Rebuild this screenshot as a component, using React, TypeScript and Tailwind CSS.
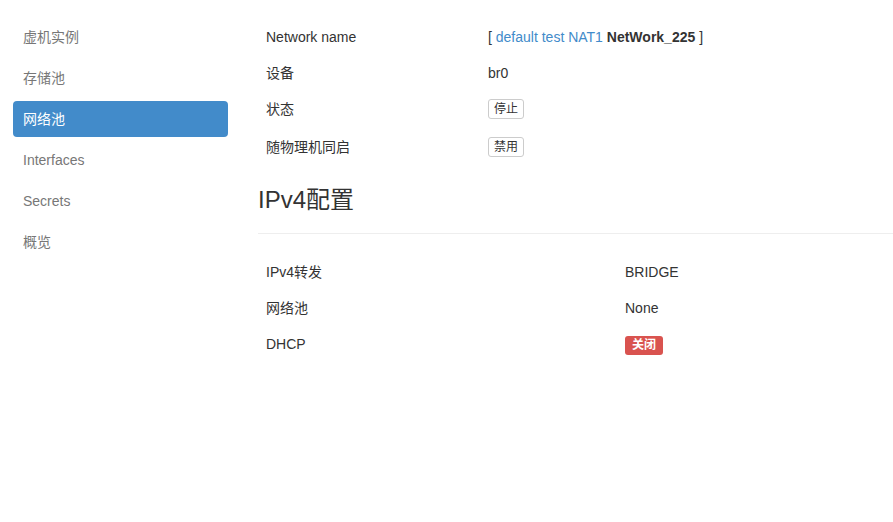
import React from 'react';

const navItems = ['虚机实例', '存储池', '网络池', 'Interfaces', 'Secrets', '概览'];

const font = { fontFamily: '"Liberation Sans", "Noto Sans CJK SC", sans-serif' };

const SmallButton: React.FC<{ label: string }> = ({ label }) => (
  <button className="mt-[8px] h-[20px] rounded-[3px] border border-[#ccc] bg-white px-[5px] text-[12px] leading-4 text-[#333]">
    {label}
  </button>
);

const Row: React.FC<{ label: string; labelWidth: string; height: string; children: React.ReactNode }> = ({
  label,
  labelWidth,
  height,
  children,
}) => (
  <div className={`flex ${height}`}>
    <div className={`${labelWidth} px-2 pt-2 leading-5`}>{label}</div>
    <div className="px-2 leading-5">{children}</div>
  </div>
);

export default function App() {
  return (
    <div className="flex h-[522px] w-full bg-white text-[14px] text-[#333]" style={font}>
      {/* sidebar */}
      <div className="w-[228px] shrink-0 pl-[13px] pt-[19px]">
        {navItems.map((item) => (
          <div
            key={item}
            className={`mb-[5px] h-[36px] rounded-[4px] px-[10px] py-2 leading-5 ${
              item === '网络池' ? 'bg-[#428bca] text-white' : 'text-[#777]'
            }`}
          >
            {item}
          </div>
        ))}
      </div>

      {/* main */}
      <div className="ml-[30px] flex-1 pt-[19px]">
        <Row label="Network name" labelWidth="w-[222px]" height="h-[36px]">
          <div className="pt-2">
            [ <span className="text-[#428bca]">default test NAT1</span>{' '}
            <span className="font-bold">NetWork_225</span> ]
          </div>
        </Row>
        <Row label="设备" labelWidth="w-[222px]" height="h-[36px]">
          <div className="pt-2">br0</div>
        </Row>
        <Row label="状态" labelWidth="w-[222px]" height="h-[38px]">
          <SmallButton label="停止" />
        </Row>
        <Row label="随物理机同启" labelWidth="w-[222px]" height="h-[38px]">
          <SmallButton label="禁用" />
        </Row>

        <h3 className="mt-[20px] text-[24px] leading-[26px]">IPv4配置</h3>
        <div className="mt-[20px] h-px bg-[#eee]" />

        <div className="pt-[20px]">
          <Row label="IPv4转发" labelWidth="w-[359px]" height="h-[36px]">
            <div className="pt-2">BRIDGE</div>
          </Row>
          <Row label="网络池" labelWidth="w-[359px]" height="h-[36px]">
            <div className="pt-2">None</div>
          </Row>
          <Row label="DHCP" labelWidth="w-[359px]" height="h-[36px]">
            <span className="mt-[10px] inline-block rounded-[3px] bg-[#d9534f] px-[7px] py-[2px] text-[12px] font-bold leading-[15px] text-white">
              关闭
            </span>
          </Row>
        </div>
      </div>
    </div>
  );
}
